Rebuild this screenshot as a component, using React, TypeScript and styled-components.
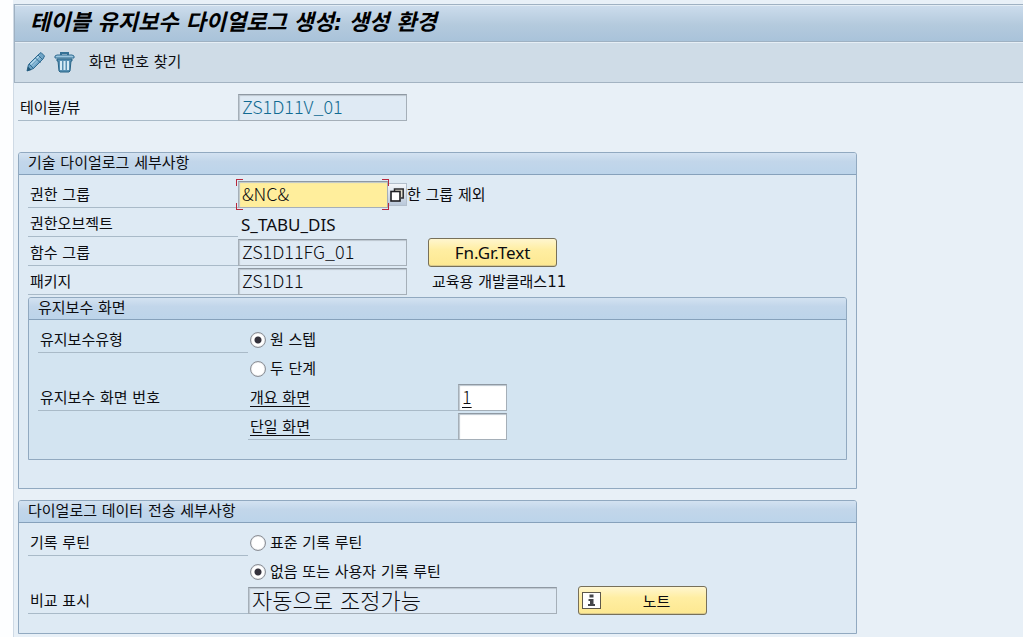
import React from "react";
import styled, { createGlobalStyle, css } from "styled-components";

const uiFont = `"DejaVu Sans", "Noto Sans CJK KR", sans-serif`;
const latinFont = `"Noto Sans", "Noto Sans CJK KR", sans-serif`;
const fieldFont = `"Noto Sans CJK KR", sans-serif`;

const GlobalStyle = createGlobalStyle`
  *, *::before, *::after { box-sizing: border-box; }
  body { margin: 0; background: #fdfeff; font-family: ${uiFont}; font-size: 15px; color: #0c0c10; }
  button, input { font: inherit; color: inherit; margin: 0; }
`;

const Page = styled.div`
  min-height: 100vh;
  padding: 4px 0 0 13px;
  background: linear-gradient(90deg, #fdfeff 13px, #e8f0f7 13px);
`;

const Screen = styled.div`
  min-height: calc(100vh - 4px);
  border-left: 1px solid #cfdae5;
`;

const TitleBar = styled.header`
  height: 38px;
  padding-left: 15px;
  display: flex;
  align-items: center;
  border: 1px solid #9fb1c2;
  border-right: 0;
  box-shadow: inset 0 1px 0 #e3edf5;
  background: linear-gradient(#cddded, #b4cadd 55%, #a9c3da);
`;

const Title = styled.h1`
  margin: 0;
  font: italic bold 22px/32px "DejaVu Sans Condensed", "Noto Sans CJK KR", sans-serif;
  color: #000;
  white-space: nowrap;
`;

const Toolbar = styled.div`
  height: 41px;
  display: flex;
  align-items: center;
  gap: 8px;
  padding-left: 11px;
  background: #cfdce7;
  border: 1px solid #a3b3c2;
  border-width: 0 0 1px 1px;
  box-shadow: inset 0 1px 0 #e6eef5;
`;

const ToolButton = styled.button`
  display: flex;
  padding: 0;
  border: 0;
  background: none;
  white-space: nowrap;
`;

const FindButton = styled(ToolButton)`
  margin-left: 6px;
  padding-bottom: 3px;
`;

const Content = styled.main`
  padding: 9px 4px 3px;
`;

const Row = styled.div`
  display: flex;
  align-items: flex-end;
  height: 29px;
`;

const Caption = styled.label<{ $width?: number; $rule?: boolean; $linked?: boolean }>`
  flex: none;
  width: ${(p) => p.$width ?? 210}px;
  height: 29px;
  padding: 4px 0 0 2px;
  line-height: 24px;
  white-space: nowrap;
  border-bottom: 1px solid ${(p) => (p.$rule === false ? "transparent" : "#a9bac8")};
  ${(p) =>
    p.$linked &&
    css`
      text-decoration: underline;
      text-underline-offset: 3px;
    `}
`;

const TopRow = styled(Row)`
  ${Caption} { width: 220px; }
`;

const tones = {
  plain: "#dfeaf4",
  focus: "#ffee9c",
  open: "#ffffff",
};

const Field = styled.input<{ $width: number; $tone?: keyof typeof tones; $large?: boolean }>`
  flex: none;
  width: ${(p) => p.$width}px;
  height: 27px;
  padding: 0 3px 3px;
  border: 1px solid #a5afb8;
  border-top-color: #8f99a3;
  border-radius: 0;
  outline: 0;
  box-shadow: inset 1px 1px 1px #bcc6cf;
  background: ${(p) => tones[p.$tone ?? "plain"]};
  font-family: ${(p) => (p.$large ? uiFont : fieldFont)};
  font-weight: 300;
  font-size: ${(p) => (p.$large ? 22 : 18)}px;
`;

const KeyField = styled(Field)`
  color: #116a92;
`;

const CursorField = styled(Field)`
  text-decoration: underline;
  text-underline-offset: 3px;
`;

const FocusFrame = styled.span`
  position: relative;
  display: flex;

  &::after {
    content: "";
    position: absolute;
    inset: -2px -1px -2px -2px;
    pointer-events: none;
    --c: linear-gradient(#b8283c, #b8283c);
    background:
      var(--c) 0 0 / 7px 1px, var(--c) 0 0 / 1px 7px,
      var(--c) 100% 0 / 7px 1px, var(--c) 100% 0 / 1px 7px,
      var(--c) 0 100% / 7px 1px, var(--c) 0 100% / 1px 7px,
      var(--c) 100% 100% / 7px 1px, var(--c) 100% 100% / 1px 7px;
    background-repeat: no-repeat;
  }
`;

const HelpButton = styled.button`
  flex: none;
  display: grid;
  place-items: center;
  width: 19px;
  height: 23px;
  margin: 0 0 2px;
  padding: 0;
  border: 1px solid #b3bfcc;
  border-left: 0;
  background: linear-gradient(#f3f6fa, #b9c8da);
`;

const Note = styled.span<{ $inset?: number }>`
  padding-left: ${(p) => p.$inset ?? 0}px;
  line-height: 25px;
  white-space: nowrap;
`;

const Value = styled.output`
  padding-left: 3px;
  font: 17px/25px ${latinFont};
`;

const ActionButton = styled.button`
  display: flex;
  align-items: center;
  width: 129px;
  height: 29px;
  margin: 0 0 -1px 21px;
  padding: 0 3px;
  border: 1px solid #77705a;
  border-radius: 3px;
  background: linear-gradient(#fff6cf, #ffeea2 40%, #fde891);
  box-shadow: inset 0 -1px 0 #d9c98b;
  font-family: ${latinFont};
  gap: 9px;
`;

const ActionText = styled.span<{ $size?: number }>`
  flex: 1;
  text-align: center;
  font-size: ${(p) => p.$size ?? 17}px;
`;

const Panel = styled.section<{ $inner?: boolean }>`
  width: 100%;
  max-width: ${(p) => (p.$inner ? "none" : "839px")};
  margin-top: ${(p) => (p.$inner ? 2 : 31)}px;
  border: 1px solid #91a9c0;
  border-radius: 3px 3px 0 0;
  background: ${(p) => (p.$inner ? "#d3e4f1" : "#deeaf4")};
  & + & { margin-top: 11px; }
`;

const PanelTitle = styled.h2`
  height: 22px;
  margin: 0;
  padding-left: 9px;
  font-size: 15px;
  font-weight: 400;
  line-height: 21px;
  white-space: nowrap;
  border-bottom: 1px solid #86a1bb;
  border-radius: 2px 2px 0 0;
  background: linear-gradient(#d3e2f1, #c2d6ea 40%, #bcd4ea);
`;

const PanelBody = styled.div<{ $bottom: number }>`
  padding: 4px 9px ${(p) => p.$bottom}px;
`;

const Choice = styled.label`
  display: flex;
  align-items: center;
  gap: 4px;
  height: 29px;
  padding: 3px 0 0 2px;
  line-height: 25px;
  white-space: nowrap;
`;

const Radio = styled.input`
  appearance: none;
  width: 16px;
  height: 16px;
  border: 1px solid #8b8f96;
  border-radius: 50%;
  background: #fff;
  box-shadow: inset 0 0 1px #8b8f96;
  &:checked {
    background: radial-gradient(circle, #34323c 3px, #fff 4px);
  }
`;

const PencilIcon = () => (
  <svg width="20" height="20" viewBox="0 0 20 20" aria-hidden="true">
    <path d="M1 19l1.500-6.500L12 3l3-2.500L18.500 4 17 7l-9.500 9.500z" fill="#6fa4c6" stroke="#2f6a90" />
    <path d="M4 12L13 3l1 1-9 9z" fill="#b9dbee" />
    <path d="M6 14.500L15 5.500" stroke="#a5cde4" fill="none" />
    <path d="M12 3l5 5M3 12l5 5M9.500 6l5 5" stroke="#2f6a90" fill="none" />
    <path d="M1 19l1-4.500 3.500 3.500z" fill="#235878" />
  </svg>
);

const TrashIcon = () => (
  <svg width="21" height="21" viewBox="0 0 21 21" aria-hidden="true">
    <path d="M7 3V1h7v2" fill="none" stroke="#357196" strokeWidth="2" />
    <path d="M1 6V4l2-1h15l2 1v2z" fill="#9cc6df" stroke="#2f6a90" />
    <path d="M3 7h15v2h-1l-1 10-1 1H6l-1-1L4 9H3z" fill="#568fb2" stroke="#286487" />
    <path d="M7 9v9M10.500 9v9M14 9v9" stroke="#d6ebf5" strokeWidth="2" />
  </svg>
);

const HelpIcon = () => (
  <svg width="14" height="14" viewBox="0 0 14 14" aria-hidden="true">
    <path d="M4.500 3V1h8.700v9H11" fill="#e3dfd0" stroke="#2c2c30" strokeWidth="1.500" />
    <rect x="1" y="3.500" width="9" height="9.500" fill="#fff" stroke="#1e1e22" strokeWidth="1.600" />
  </svg>
);

const InfoIcon = () => (
  <svg width="19" height="17" viewBox="0 0 19 17" aria-hidden="true">
    <rect x=".5" y=".5" width="18" height="16" fill="#fff" stroke="#5d584a" />
    <path d="M7.500 2.500h4v3h-4zM6.500 7h5v5h1.500v2h-7v-2h2V9h-1.500z" fill="#45464a" />
  </svg>
);

export default function App() {
  return (
    <Page>
      <GlobalStyle />
      <Screen>
        <TitleBar>
          <Title>테이블 유지보수 다이얼로그 생성: 생성 환경</Title>
        </TitleBar>
        <Toolbar>
          <ToolButton aria-label="변경"><PencilIcon /></ToolButton>
          <ToolButton aria-label="삭제"><TrashIcon /></ToolButton>
          <FindButton>화면 번호 찾기</FindButton>
        </Toolbar>
        <Content>
          <TopRow>
            <Caption htmlFor="table">테이블/뷰</Caption>
            <KeyField id="table" $width={169} readOnly defaultValue="ZS1D11V_01" />
          </TopRow>

          <Panel>
            <PanelTitle>기술 다이얼로그 세부사항</PanelTitle>
            <PanelBody $bottom={28}>
              <Row>
                <Caption htmlFor="auth">권한 그룹</Caption>
                <FocusFrame>
                  <Field id="auth" $width={150} $tone="focus" defaultValue="&NC&" />
                </FocusFrame>
                <HelpButton aria-label="입력 도움말"><HelpIcon /></HelpButton>
                <Note>한 그룹 제외</Note>
              </Row>
              <Row>
                <Caption htmlFor="object">권한오브젝트</Caption>
                <Value id="object">S_TABU_DIS</Value>
              </Row>
              <Row>
                <Caption htmlFor="group">함수 그룹</Caption>
                <Field id="group" $width={169} readOnly defaultValue="ZS1D11FG_01" />
                <ActionButton><ActionText>Fn.Gr.Text</ActionText></ActionButton>
              </Row>
              <Row>
                <Caption htmlFor="package">패키지</Caption>
                <Field id="package" $width={169} readOnly defaultValue="ZS1D11" />
                <Note $inset={25}>교육용 개발클래스11</Note>
              </Row>

              <Panel $inner>
                <PanelTitle>유지보수 화면</PanelTitle>
                <PanelBody $bottom={19}>
                  <Row>
                    <Caption as="span">유지보수유형</Caption>
                    <Choice><Radio type="radio" name="kind" defaultChecked />원 스텝</Choice>
                  </Row>
                  <Row>
                    <Caption as="span" $rule={false} />
                    <Choice><Radio type="radio" name="kind" />두 단계</Choice>
                  </Row>
                  <Row>
                    <Caption as="span">유지보수 화면 번호</Caption>
                    <Caption htmlFor="overview" $linked>개요 화면</Caption>
                    <CursorField id="overview" $width={49} $tone="open" defaultValue="1" />
                  </Row>
                  <Row>
                    <Caption as="span" $rule={false} />
                    <Caption htmlFor="single" $linked>단일 화면</Caption>
                    <Field id="single" $width={49} $tone="open" />
                  </Row>
                </PanelBody>
              </Panel>
            </PanelBody>
          </Panel>

          <Panel>
            <PanelTitle>다이얼로그 데이터 전송 세부사항</PanelTitle>
            <PanelBody $bottom={19}>
              <Row>
                <Caption as="span" $width={220}>기록 루틴</Caption>
                <Choice><Radio type="radio" name="routine" />표준 기록 루틴</Choice>
              </Row>
              <Row>
                <Caption as="span" $width={220} $rule={false} />
                <Choice><Radio type="radio" name="routine" defaultChecked />없음 또는 사용자 기록 루틴</Choice>
              </Row>
              <Row>
                <Caption htmlFor="compare" $width={220}>비교 표시</Caption>
                <Field id="compare" $width={309} $large readOnly defaultValue="자동으로 조정가능" />
                <ActionButton>
                  <InfoIcon />
                  <ActionText $size={15}>노트</ActionText>
                </ActionButton>
              </Row>
            </PanelBody>
          </Panel>
        </Content>
      </Screen>
    </Page>
  );
}
